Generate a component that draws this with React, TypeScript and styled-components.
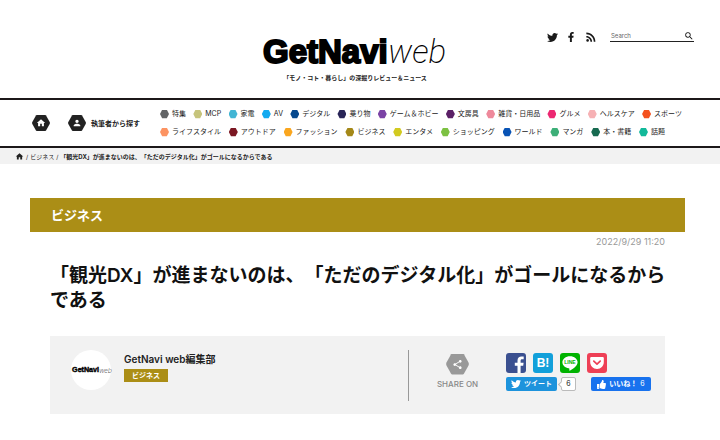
import React from 'react';
import styled, { createGlobalStyle } from 'styled-components';
import { FaTwitter, FaFacebookF, FaThumbsUp } from 'react-icons/fa';
import { MdHome, MdPerson, MdRssFeed, MdSearch, MdShare } from 'react-icons/md';

const GlobalStyle = createGlobalStyle`
  * { box-sizing: border-box; }
  body {
    margin: 0;
    background: #fff;
    color: #222;
    font-family: Inter, "Noto Sans CJK JP", sans-serif;
    text-spacing-trim: space-all;
  }
  a { color: inherit; text-decoration: none; }
  button, input { font-family: inherit; }
  svg { display: block; flex: none; }
`;

const Header = styled.header`
  display: grid;
  grid-template-columns: 1fr auto 1fr;
  padding: 30px 26px 15px 16px;
`;

const Brand = styled.div`
  grid-column: 2;
  display: flex;
  flex-direction: column;
  align-items: center;
  padding-top: 3px;
`;

const Tagline = styled.p`
  margin: 0;
  font-size: 6px;
  line-height: 10px;
  font-weight: 600;
`;

const Tools = styled.div`
  display: flex;
  justify-content: flex-end;
  align-items: flex-start;
  gap: 12px;
`;

const SocialLinks = styled.div`
  display: flex;
  align-items: center;
  gap: 8px;
  color: #1a1a1a;
`;

const SearchForm = styled.form`
  display: flex;
  align-items: center;
  width: 84px;
  height: 12px;
  border-bottom: 1px solid #222;
`;

const SearchInput = styled.input`
  flex: 1;
  min-width: 0;
  padding: 0 1px;
  border: 0;
  outline: 0;
  background: transparent;
  font-size: 6px;
  line-height: 10px;
  &::placeholder { color: #666; opacity: 1; }
`;

const SearchButton = styled.button`
  padding: 0;
  border: 0;
  background: transparent;
  color: #111;
`;

const Nav = styled.nav`
  display: flex;
  align-items: center;
  height: 50px;
  padding: 0 38px 0 32px;
  border-top: 2px solid #1c1819;
  border-bottom: 2px solid #1c1819;
`;

const NavLink = styled.a`
  display: flex;
  align-items: center;
  gap: 5px;
  margin-right: 18px;
  font-size: 7px;
  font-weight: 600;
  white-space: nowrap;
`;

const HexBox = styled.span<{ $size: number; $color: string }>`
  display: grid;
  place-items: center;
  width: ${(p) => p.$size}px;
  height: ${(p) => p.$size - 2}px;
  color: #fff;
  background: ${(p) => p.$color};
  clip-path: polygon(26% 0, 74% 0, 78% 3%, 99% 45%, 99% 55%, 78% 97%, 74% 100%, 26% 100%, 22% 97%, 1% 55%, 1% 45%, 22% 3%);
`;

const Categories = styled.div`
  flex: 1;
  display: grid;
  gap: 8px;
  padding-left: 2px;
`;

const CategoryRow = styled.ul<{ $inset: number }>`
  display: flex;
  justify-content: space-between;
  margin: 0;
  padding: 0 ${(p) => p.$inset}px 0 0;
  list-style: none;
  font-size: 7px;
  line-height: 10px;
  white-space: nowrap;
`;

const CategoryLink = styled.a<{ $color: string }>`
  display: flex;
  align-items: center;
  gap: 3px;
  &::before {
    content: "";
    width: 9px;
    height: 9px;
    background: ${(p) => p.$color};
    clip-path: polygon(24% 4%, 76% 4%, 100% 50%, 76% 96%, 24% 96%, 0 50%);
  }
`;

const Breadcrumb = styled.nav`
  display: flex;
  align-items: center;
  gap: 2px;
  height: 16px;
  padding: 0 15px;
  background: #f2f2f2;
  font-size: 6px;
  white-space: nowrap;
`;

const Main = styled.main`
  padding: 34px 35px 26px 30px;
`;

const CategoryBand = styled.div`
  padding: 0 21px;
  background: #ab8e16;
  color: #fff;
  font-size: 13px;
  line-height: 34px;
  font-weight: 600;
`;

const Article = styled.article`
  padding: 4px 20px 0;
`;

const PostDate = styled.time`
  display: block;
  text-align: right;
  color: #999;
  font-size: 9px;
  line-height: 12px;
`;

const Title = styled.h1`
  margin: 15px -4px 23px 0;
  color: #111;
  font-size: 19px;
  line-height: 25px;
  font-weight: 600;
`;

const AuthorCard = styled.section`
  display: flex;
  align-items: center;
  height: 78px;
  padding: 0 14px 0 21px;
  background: #f2f2f2;
`;

const Avatar = styled.a`
  display: grid;
  place-items: center;
  width: 40px;
  height: 40px;
  margin: 0 13px 10px 0;
  border-radius: 50%;
  background: #fff;
`;

const AuthorInfo = styled.div`
  flex: 1;
  margin-bottom: 10px;
`;

const AuthorName = styled.a`
  display: block;
  margin-bottom: 2px;
  font-size: 10px;
  line-height: 16px;
  font-weight: 600;
`;

const Tag = styled.a`
  display: inline-block;
  padding: 0 8px;
  background: #ab8e16;
  color: #fff;
  font-size: 7px;
  line-height: 13px;
  font-weight: 600;
  vertical-align: top;
`;

const ShareLabel = styled.div`
  display: flex;
  flex-direction: column;
  align-items: center;
  gap: 5px;
  width: 98px;
  height: 51px;
  padding-top: 4px;
  border-left: 1px solid #999;
  color: #888;
  font-size: 8px;
  line-height: 9px;
  font-weight: 500;
`;

const ShareButtons = styled.div`
  display: grid;
  gap: 4px;
  margin-bottom: 6px;
`;

const ButtonRow = styled.div<{ $gap: number }>`
  display: flex;
  gap: ${(p) => p.$gap}px;
`;

const ShareTile = styled.a<{ $color: string }>`
  display: grid;
  place-items: center;
  width: 20px;
  height: 20px;
  border-radius: 3px;
  overflow: hidden;
  background: ${(p) => p.$color};
  color: #fff;
  font-family: "Liberation Sans", sans-serif;
  font-size: 12px;
  line-height: 20px;
  font-weight: 700;
`;

const PillButton = styled.button<{ $color: string; $width: number }>`
  display: flex;
  align-items: center;
  justify-content: center;
  gap: 3px;
  width: ${(p) => p.$width}px;
  height: 14px;
  padding: 0;
  border: 0;
  border-radius: 2px;
  background: ${(p) => p.$color};
  color: #fff;
  font-size: 7px;
  line-height: 14px;
  font-weight: 600;
  white-space: nowrap;
`;

const Count = styled.span`
  font-weight: 400;
`;

const Bubble = styled.a`
  position: relative;
  width: 15px;
  height: 14px;
  margin-right: 11px;
  border: 1px solid #bbb;
  border-radius: 2px;
  background: #fff;
  font-size: 7px;
  line-height: 12px;
  text-align: center;
  &::before {
    content: "";
    position: absolute;
    left: -3px;
    top: 4px;
    width: 4px;
    height: 4px;
    border: solid #bbb;
    border-width: 0 0 1px 1px;
    background: #fff;
    transform: rotate(45deg);
  }
`;

type Category = [name: string, color: string];

const firstRow: Category[] = [
  ['特集', '#626466'],
  ['MCP', '#c6c47c'],
  ['家電', '#42b5d4'],
  ['AV', '#13aaf0'],
  ['デジタル', '#06498e'],
  ['乗り物', '#292557'],
  ['ゲーム＆ホビー', '#7b43a5'],
  ['文房具', '#5b2066'],
  ['雑貨・日用品', '#ee899b'],
  ['グルメ', '#ec2872'],
  ['ヘルスケア', '#f6b1b4'],
  ['スポーツ', '#f4511e'],
];

const secondRow: Category[] = [
  ['ライフスタイル', '#fc9362'],
  ['アウトドア', '#7b1722'],
  ['ファッション', '#faa61e'],
  ['ビジネス', '#a48818'],
  ['エンタメ', '#d2ca20'],
  ['ショッピング', '#7cc142'],
  ['ワールド', '#0853b5'],
  ['マンガ', '#3daf78'],
  ['本・書籍', '#176a50'],
  ['話題', '#12b99a'],
];

function Logo({ width }: { width: number }) {
  return (
    <svg width={width} viewBox="0 0 194 40" role="img" aria-label="GetNavi web">
      <text
        x="5"
        y="30"
        fontFamily="Liberation Sans, sans-serif"
        fontSize="33"
        fontWeight="700"
        fill="#000"
        stroke="#000"
        strokeWidth="2"
      >
        GetNavi
      </text>
      <text
        x="130"
        y="30"
        fontFamily="Roboto, sans-serif"
        fontSize="33"
        fontWeight="200"
        fontStyle="italic"
        fill="#000"
      >
        web
      </text>
    </svg>
  );
}

function Hexagon({ size, color, children }: { size: number; color: string; children: React.ReactNode }) {
  return (
    <HexBox $size={size} $color={color}>
      {children}
    </HexBox>
  );
}

function CategoryList({ items, inset }: { items: Category[]; inset: number }) {
  return (
    <CategoryRow $inset={inset}>
      {items.map(([name, color]) => (
        <li key={name}>
          <CategoryLink href="#" $color={color}>
            {name}
          </CategoryLink>
        </li>
      ))}
    </CategoryRow>
  );
}

function FacebookMark() {
  return (
    <svg width="20" height="20" viewBox="0 0 20 20">
      <path
        d="M11.500 20v-7.200H8.800V9.800h2.700V7.500C11.500 4.900 13.100 3.500 15.500 3.500c1.100 0 1.900.1 2.200.1v2.700h-1.600c-1.200 0-1.500.6-1.500 1.500v2h3l-.4 3h-2.600V20z"
        fill="#fff"
      />
    </svg>
  );
}

function LineMark() {
  return (
    <svg width="20" height="20" viewBox="0 0 20 20">
      <path
        d="M10 3.200c-4.200 0-7.600 2.700-7.600 6.100 0 3 2.700 5.500 6.300 6 .9.200.8.500.6 1.800 0 .3-.1.800.7.500 1.300-.6 7.600-4.300 7.600-8.300 0-3.400-3.400-6.100-7.600-6.100z"
        fill="#fff"
      />
      <text x="10" y="11" textAnchor="middle" fontSize="5" fontWeight="700" fill="#00b300">
        LINE
      </text>
    </svg>
  );
}

function PocketMark() {
  return (
    <svg width="20" height="20" viewBox="0 0 20 20">
      <path d="M4.500 4h11c.8 0 1.300.5 1.300 1.300V9c0 4-3 7-6.800 7s-6.800-3-6.800-7V5.300C3.200 4.500 3.700 4 4.500 4z" fill="#fff" />
      <path d="M6.800 8.200 10 11.200l3.200-3" fill="none" stroke="#ee4056" strokeWidth="1.700" strokeLinecap="round" strokeLinejoin="round" />
    </svg>
  );
}

const title = '「観光DX」が進まないのは、「ただのデジタル化」がゴールになるからである';

export default function App() {
  return (
    <>
      <GlobalStyle />
      <Header>
        <Brand>
          <a href="#">
            <Logo width={194} />
          </a>
          <Tagline>「モノ・コト・暮らし」の深掘りレビュー＆ニュース</Tagline>
        </Brand>
        <Tools>
          <SocialLinks>
            <a href="#" aria-label="Twitter"><FaTwitter size={11} /></a>
            <a href="#" aria-label="Facebook"><FaFacebookF size={10} /></a>
            <a href="#" aria-label="RSS"><MdRssFeed size={14} /></a>
          </SocialLinks>
          <SearchForm role="search">
            <SearchInput type="text" placeholder="Search" aria-label="Search" />
            <SearchButton type="submit" aria-label="検索"><MdSearch size={10} /></SearchButton>
          </SearchForm>
        </Tools>
      </Header>
      <Nav>
        <NavLink href="#" aria-label="ホーム">
          <Hexagon size={18} color="#222"><MdHome size={10} /></Hexagon>
        </NavLink>
        <NavLink href="#">
          <Hexagon size={18} color="#222"><MdPerson size={10} /></Hexagon>
          執筆者から探す
        </NavLink>
        <Categories>
          <CategoryList items={firstRow} inset={0} />
          <CategoryList items={secondRow} inset={17} />
        </Categories>
      </Nav>
      <Breadcrumb aria-label="パンくず">
        <a href="#" aria-label="ホーム"><MdHome size={9} /></a>
        <span>/</span>
        <a href="#">ビジネス</a>
        <span>/</span>
        <b>{title}</b>
      </Breadcrumb>
      <Main>
        <CategoryBand>ビジネス</CategoryBand>
        <Article>
          <PostDate dateTime="2022-09-29T11:20">2022/9/29 11:20</PostDate>
          <Title>{title}</Title>
          <AuthorCard>
            <Avatar href="#"><Logo width={42} /></Avatar>
            <AuthorInfo>
              <AuthorName href="#">GetNavi web編集部</AuthorName>
              <Tag href="#">ビジネス</Tag>
            </AuthorInfo>
            <ShareLabel>
              <Hexagon size={23} color="#999"><MdShare size={11} /></Hexagon>
              SHARE ON
            </ShareLabel>
            <ShareButtons>
              <ButtonRow $gap={7}>
                <ShareTile href="#" $color="#3b5090" aria-label="Facebook"><FacebookMark /></ShareTile>
                <ShareTile href="#" $color="#12a0da">B!</ShareTile>
                <ShareTile href="#" $color="#00b300" aria-label="LINE"><LineMark /></ShareTile>
                <ShareTile href="#" $color="#ee4056" aria-label="Pocket"><PocketMark /></ShareTile>
              </ButtonRow>
              <ButtonRow $gap={4}>
                <PillButton type="button" $color="#1d93dc" $width={51}>
                  <FaTwitter size={10} />ツイート
                </PillButton>
                <Bubble href="#">6</Bubble>
                <PillButton type="button" $color="#1872ee" $width={60}>
                  <FaThumbsUp size={9} />いいね！<Count>6</Count>
                </PillButton>
              </ButtonRow>
            </ShareButtons>
          </AuthorCard>
        </Article>
      </Main>
    </>
  );
}
